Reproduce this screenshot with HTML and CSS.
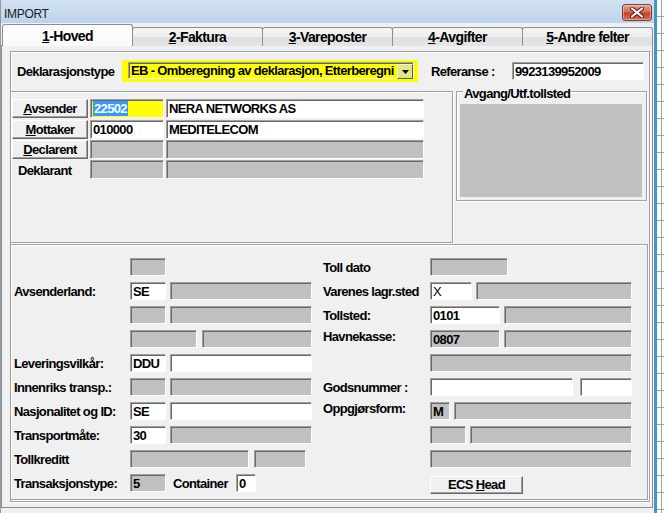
FILE: index.html
```html
<!DOCTYPE html>
<html>
<head>
<meta charset="utf-8">
<link rel="stylesheet" href="styles.css">
</head>
<body>
<div class="screen">
  <div class="window">
    <div class="titlebar">
      <span class="title">IMPORT</span>
      <div class="close">
        <svg width="14" height="11" viewBox="0 0 14 11"><path d="M2 1.5 L12 9.5 M12 1.5 L2 9.5" stroke="#5a1a10" stroke-width="4" stroke-linecap="round"/><path d="M2 1.5 L12 9.5 M12 1.5 L2 9.5" stroke="#fff" stroke-width="2.2" stroke-linecap="round"/></svg>
      </div>
    </div>
    <div class="tabs">
      <div class="tab active"><u>1</u>-Hoved</div>
      <div class="tab"><u>2</u>-Faktura</div>
      <div class="tab"><u>3</u>-Vareposter</div>
      <div class="tab"><u>4</u>-Avgifter</div>
      <div class="tab"><u>5</u>-Andre felter</div>
    </div>
    <div class="page">
      <div class="frame">
        <div class="typerow">
          <span class="lbl typelbl">Deklarasjonstype</span>
          <div class="hl">
            <div class="combo">
              <span class="combotext">EB - Omberegning av deklarasjon, Etterberegni</span>
              <span class="drop"><svg width="7" height="4" viewBox="0 0 7 4"><path d="M0 0 H7 L3.5 4 Z" fill="#000"/></svg></span>
            </div>
          </div>
          <span class="lbl reflbl">Referanse :</span>
          <div class="fld white w132">9923139952009</div>
        </div>

        <div class="upper">
          <div class="group parties">
            <div class="prow">
              <div class="btn wbtn"><u>A</u>vsender</div>
              <div class="fld yellow w74"><span class="sel">22502</span></div>
              <div class="fld white w258">NERA NETWORKS AS</div>
            </div>
            <div class="prow">
              <div class="btn wbtn"><u>M</u>ottaker</div>
              <div class="fld white w74">010000</div>
              <div class="fld white w258">MEDITELECOM</div>
            </div>
            <div class="prow">
              <div class="btn wbtn"><u>D</u>eclarent</div>
              <div class="fld gray w74"></div>
              <div class="fld gray w258"></div>
            </div>
            <div class="prow">
              <span class="lbl wbtn dlbl">Deklarant</span>
              <div class="fld gray w74"></div>
              <div class="fld gray w258"></div>
            </div>
          </div>
          <div class="group avgang">
            <span class="legend">Avgang/Utf.tollsted</span>
            <div class="grayarea"></div>
          </div>
        </div>

        <div class="group lower">
          <div class="col left">
            <div class="row"><span class="lbl l1"></span><div class="fld gray w36"></div></div>
            <div class="row"><span class="lbl l1">Avsenderland:</span><div class="fld white w36">SE</div><div class="fld gray w142 g4"></div></div>
            <div class="row"><span class="lbl l1"></span><div class="fld gray w36"></div><div class="fld gray w142 g4"></div></div>
            <div class="row"><span class="lbl l1"></span><div class="fld gray w67"></div><div class="fld gray w110 g5"></div></div>
            <div class="row"><span class="lbl l1">Leveringsvilkår:</span><div class="fld white w36">DDU</div><div class="fld white w142 g4"></div></div>
            <div class="row"><span class="lbl l1">Innenriks transp.:</span><div class="fld gray w36"></div><div class="fld gray w142 g4"></div></div>
            <div class="row"><span class="lbl l1">Nasjonalitet og ID:</span><div class="fld white w36">SE</div><div class="fld white w142 g4"></div></div>
            <div class="row"><span class="lbl l1">Transportmåte:</span><div class="fld white w36">30</div><div class="fld gray w142 g4"></div></div>
            <div class="row"><span class="lbl l1">Tollkreditt</span><div class="fld gray w119"></div><div class="fld gray w52 g5"></div></div>
            <div class="row"><span class="lbl l1">Transaksjonstype:</span><div class="fld gray w36">5</div><span class="lbl contlbl">Container</span><div class="fld white w20">0</div></div>
          </div>
          <div class="col right">
            <div class="row"><span class="lbl l2">Toll dato</span><div class="fld gray w78"></div></div>
            <div class="row"><span class="lbl l2">Varenes lagr.sted</span><div class="fld white w42 thin">X</div><div class="fld gray w156 g4"></div></div>
            <div class="row"><span class="lbl l2">Tollsted:</span><div class="fld white w70">0101</div><div class="fld gray w128 g4"></div></div>
            <div class="row"><span class="lbl l2 up">Havnekasse:</span><div class="fld gray w70">0807</div><div class="fld gray w128 g4"></div></div>
            <div class="row"><span class="lbl l2"></span><div class="fld gray w202"></div></div>
            <div class="row"><span class="lbl l2">Godsnummer :</span><div class="fld white w143"></div><div class="fld white w52 g7"></div></div>
            <div class="row"><span class="lbl l2 up">Oppgjørsform:</span><div class="fld gray w20">M</div><div class="fld gray w178 g4"></div></div>
            <div class="row"><span class="lbl l2"></span><div class="fld gray w36"></div><div class="fld gray w162 g4"></div></div>
            <div class="row"><span class="lbl l2"></span><div class="fld gray w202"></div></div>
            <div class="row btnrow"><span class="lbl l2"></span><div class="btn ecs">ECS <u>H</u>ead</div></div>
          </div>
        </div>
      </div>
    </div>
  </div>
  <div class="strip"></div>
</div>
</body>
</html>
```

FILE: styles.css
```css
* { box-sizing: border-box; }

body {
  margin: 0;
  background: #fff;
  font-family: "Liberation Sans", Arial, sans-serif;
  font-weight: bold;
  font-size: 13px;
  letter-spacing: -0.65px;
  color: #000;
}

.screen {
  display: flex;
  width: 664px;
  height: 513px;
  overflow: hidden;
}

.window {
  width: 655px;
  height: 513px;
  background: #f0f0f0;
  border-left: 1px solid #8d9bab;
  border-right: 1px solid #7d8790;
  display: flex;
  flex-direction: column;
}

.titlebar {
  height: 23px;
  flex: none;
  display: flex;
  justify-content: space-between;
  align-items: flex-start;
  padding: 0 2px 0 3px;
  background: linear-gradient(#d2e2f3, #bcd3ec);
}

.title {
  font-weight: normal;
  font-size: 12px;
  letter-spacing: -0.3px;
  line-height: 12px;
  margin-top: 8px;
  color: #1a1a1a;
}

.close {
  width: 30px;
  height: 17px;
  margin-top: 4px;
  border: 1px solid #7e3b30;
  border-radius: 3px;
  background: linear-gradient(#e8a496, #d56a55 45%, #c6442e 55%, #d86e56);
  display: flex;
  align-items: center;
  justify-content: center;
  box-shadow: inset 0 0 0 1px rgba(255,255,255,0.35);
}

.tabs {
  height: 23px;
  flex: none;
  display: flex;
  align-items: flex-end;
  padding-left: 1px;
  margin-bottom: -1px;
  position: relative;
  z-index: 1;
}

.tab {
  width: 131px;
  height: 19px;
  margin-left: -1px;
  border: 1px solid #8c8e94;
  border-bottom: none;
  border-radius: 3px 3px 0 0;
  background: linear-gradient(#f7f7f7, #ececec 50%, #e0e0e0 51%, #e4e4e4);
  text-align: center;
  line-height: 18px;
  font-size: 14px;
  letter-spacing: -0.6px;
}

.tab.active {
  height: 22px;
  margin-left: 0;
  background: #fbfbfb;
  border-color: #8c8e94;
  line-height: 22px;
}

.page {
  width: 652px;
  height: 463px;
  flex: none;
  border: 1px solid #8c8e94;
  background: #f0f0f0;
}

.frame {
  width: 640px;
  height: 451px;
  margin: 5px 0 0 8px;
  border: 1px solid #a0a0a0;
  box-shadow: inset 1px 1px 0 #fff, 1px 1px 0 #fff;
}

.lbl { white-space: nowrap; }

.typerow {
  display: flex;
  align-items: center;
  height: 22px;
  margin-top: 8px;
  padding-left: 6px;
}

.typelbl { width: 105px; }

.hl {
  background: #ffff00;
  padding: 2px 4px 3px 6px;
}

.combo {
  width: 286px;
  height: 17px;
  display: flex;
  background: #ffff00;
  border: 1px solid;
  border-color: #a0a0a0 #fff #fff #a0a0a0;
  box-shadow: inset 1px 1px 0 #696969;
}

.combotext {
  flex: 1;
  overflow: hidden;
  white-space: nowrap;
  padding-left: 2px;
  line-height: 16px;
}

.drop {
  width: 16px;
  height: 15px;
  margin-top: 1px;
  background: #e4e48c;
  border: 1px solid;
  border-color: #f8f8b0 #5f5f30 #5f5f30 #f8f8b0;
  display: flex;
  align-items: center;
  justify-content: center;
}

.reflbl {
  width: 81px;
  margin-left: 13px;
}

.fld {
  height: 18px;
  flex: none;
  border: 1px solid;
  border-color: #a0a0a0 #fff #fff #a0a0a0;
  box-shadow: inset 1px 1px 0 #696969;
  padding-left: 2px;
  line-height: 17px;
  white-space: nowrap;
  overflow: hidden;
}

.white { background: #fff; }
.gray { background: #c0c0c0; }
.yellow { background: #ffff00; }

.sel {
  background: #3399ff;
  color: #fff;
  padding: 0 1px;
}

.w20 { width: 20px; }
.w36 { width: 36px; }
.w42 { width: 42px; }
.w52 { width: 52px; }
.w67 { width: 67px; }
.w70 { width: 70px; }
.w74 { width: 74px; }
.w78 { width: 78px; }
.w110 { width: 110px; }
.w119 { width: 119px; }
.w128 { width: 128px; }
.w132 { width: 132px; }
.w142 { width: 142px; }
.w143 { width: 143px; }
.w156 { width: 156px; }
.w162 { width: 162px; }
.w178 { width: 178px; }
.w202 { width: 202px; }
.w258 { width: 258px; }

.g4 { margin-left: 4px; }
.g5 { margin-left: 5px; }
.g7 { margin-left: 7px; }

.thin { font-weight: normal; }

.group {
  border: 1px solid #a0a0a0;
  box-shadow: inset 1px 1px 0 #fff, 1px 1px 0 #fff;
}

.upper {
  display: flex;
  align-items: flex-start;
  margin-top: 9px;
}

.parties {
  width: 442px;
  height: 152px;
  border-left: none;
  box-shadow: inset 0 1px 0 #fff, 1px 1px 0 #fff;
  padding: 7px 0 0 1px;
}

.prow {
  display: flex;
  gap: 2px;
  height: 19px;
  margin-bottom: 1px;
}

.prow:first-child { margin-bottom: 2px; }

.prow .fld { height: 19px; line-height: 18px; }

.wbtn { width: 76px; flex: none; }

.dlbl {
  padding-left: 6px;
  line-height: 22px;
}

.btn {
  height: 19px;
  border: 1px solid;
  border-color: #fff #696969 #696969 #fff;
  box-shadow: inset -1px -1px 0 #a0a0a0;
  background: #f0f0f0;
  text-align: center;
  line-height: 17px;
}

.avgang {
  width: 191px;
  height: 110px;
  margin-left: 3px;
}

.legend {
  display: block;
  width: max-content;
  margin: -5px 0 0 6px;
  padding: 0 1px;
  line-height: 14px;
  background: #f0f0f0;
}

.grayarea {
  width: 182px;
  height: 93px;
  margin: 3px 0 0 3px;
  background: #c0c0c0;
}

.lower {
  width: 637px;
  height: 256px;
  margin-top: 1px;
  border-left: none;
  box-shadow: inset 0 1px 0 #fff, 1px 1px 0 #fff;
  padding: 13px 0 0 3px;
  display: flex;
}

.col { display: flex; flex-direction: column; }
.left { width: 298px; }
.right { width: 309px; margin-left: 11px; }

.row {
  display: flex;
  align-items: center;
  height: 18px;
  margin-bottom: 6px;
}

.l1 { width: 116px; flex: none; line-height: 18px; padding-top: 2px; }
.l2 { width: 107px; flex: none; line-height: 18px; padding-top: 1px; }
.l2.up { padding-top: 0; margin-top: -4px; }

.contlbl { margin-left: 7px; width: 63px; line-height: 18px; padding-top: 2px; }

.btnrow { margin-top: 2px; }

.ecs {
  width: 93px;
  height: 18px;
  line-height: 16px;
}

.strip {
  width: 9px;
  height: 513px;
  background-color: #fff;
  border-left: 2px solid #26a0da;
  background-image:
    linear-gradient(90deg, transparent 4px, #a0a0a0 4px, #a0a0a0 5px, transparent 5px),
    repeating-linear-gradient(180deg, transparent 0, transparent 16px, #a0a0a0 16px, #a0a0a0 17px);
}
```
